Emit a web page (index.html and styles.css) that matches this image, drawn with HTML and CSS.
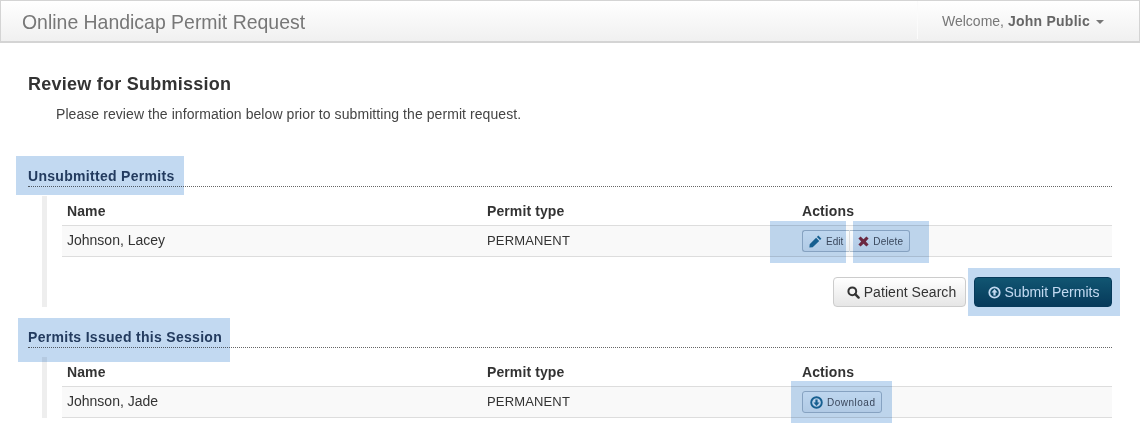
FILE: index.html
```html
<!DOCTYPE html>
<html lang="en">
  <head>
    <meta charset="UTF-8" />
    <title>Online Handicap Permit Request</title>
    <link rel="stylesheet" href="styles.css">
  </head>
  <body>
    <nav class="navbar">
      <span class="brand">Online Handicap Permit Request</span>
      <div class="user-menu">Welcome, <b>John Public</b><span class="caret"></span></div>
    </nav>

    <main class="content">
      <h1>Review for Submission</h1>
      <p class="intro">Please review the information below prior to submitting the permit request.</p>

      <section class="first-section">
        <h2 class="section-title"><span class="mark mark-unsubmitted"></span>Unsubmitted Permits</h2>
        <div class="section-body">
          <div class="permit-table">
            <div class="row head">
              <div class="col-name">Name</div>
              <div class="col-type">Permit type</div>
              <div class="col-actions">Actions</div>
            </div>
            <div class="row data">
              <div class="col-name">Johnson, Lacey</div>
              <div class="col-type">PERMANENT</div>
              <div class="col-actions">
                <button class="btn-small btn-edit">
                  <span class="mark mark-edit"></span>
                  <svg class="icon" width="13" height="13" viewBox="0 0 13 13"><path fill="#1d6f98" d="M9.3 0.6 12.4 3.7 11 5.1 7.9 2z M7.1 2.8 10.2 5.9 3.7 12.3 0.4 12.6 0.7 9.2z"/></svg>
                  Edit
                </button>
                <button class="btn-small btn-delete">
                  <span class="mark mark-delete"></span>
                  <svg class="icon" width="11" height="11" viewBox="0 0 11 11"><path fill="#8c2f45" d="M2.6 0.4 5.5 3.2 8.4 0.4 10.6 2.6 7.8 5.5 10.6 8.4 8.4 10.6 5.5 7.8 2.6 10.6 0.4 8.4 3.2 5.5 0.4 2.6z"/></svg>
                  Delete
                </button>
              </div>
            </div>
          </div>
          <div class="form-actions">
            <button class="btn btn-default">
              <svg class="icon" width="13" height="13" viewBox="0 0 13 13"><circle cx="5.3" cy="5.3" r="3.9" fill="none" stroke="#333" stroke-width="2"/><path d="M8.2 8.2 11.6 11.6" stroke="#333" stroke-width="2.4" stroke-linecap="round"/></svg>
              Patient Search
            </button>
            <button class="btn btn-primary">
              <span class="mark mark-submit"></span>
              <svg class="icon" width="13" height="13" viewBox="0 0 13 13"><circle cx="6.5" cy="6.5" r="5.2" fill="none" stroke="#fff" stroke-width="1.8"/><path fill="#fff" d="M6.5 3 9.5 6.4H7.6V9.6H5.4V6.4H3.5z"/></svg>
              Submit Permits
            </button>
          </div>
        </div>
      </section>

      <section>
        <h2 class="section-title"><span class="mark mark-issued"></span>Permits Issued this Session</h2>
        <div class="section-body">
          <div class="permit-table">
            <div class="row head">
              <div class="col-name">Name</div>
              <div class="col-type">Permit type</div>
              <div class="col-actions">Actions</div>
            </div>
            <div class="row data">
              <div class="col-name">Johnson, Jade</div>
              <div class="col-type">PERMANENT</div>
              <div class="col-actions">
                <button class="btn-small btn-download">
                  <span class="mark mark-download"></span>
                  <svg class="icon" width="13" height="13" viewBox="0 0 13 13"><circle cx="6.5" cy="6.5" r="5.3" fill="none" stroke="#1d6f98" stroke-width="1.9"/><path fill="#1d6f98" d="M6.5 10 3.5 6.6H5.4V3.4H7.6V6.6H9.5z"/></svg>
                  Download
                </button>
              </div>
            </div>
          </div>
        </div>
      </section>
    </main>
  </body>
</html>
```

FILE: styles.css
```css
* {
  box-sizing: border-box;
}
body {
  margin: 0;
  font-family: "Liberation Sans", Arial, sans-serif;
  font-size: 14px;
  color: #333;
  background: #fff;
  overflow: hidden;
}

/* Top bar */
.navbar {
  display: flex;
  justify-content: space-between;
  height: 43px;
  background: linear-gradient(to bottom, #fff, #f0f0f0);
  border: 1px solid #d4d4d4;
  border-width: 1px 1px 2px 1px;
}
.brand {
  padding-left: 21px;
  font-size: 19.45px;
  line-height: 42px;
  color: #777;
}
.user-menu {
  width: 222px;
  padding: 0 0 0 24px;
  margin-bottom: 2px;
  border-left: 1px solid #fbfbfb;
  font-size: 14px;
  line-height: 40px;
  color: #777;
}
.user-menu b {
  letter-spacing: 0.25px;
  color: #666;
}
.caret {
  display: inline-block;
  margin-left: 6px;
  vertical-align: middle;
  border-top: 4px solid #777;
  border-left: 4px solid transparent;
  border-right: 4px solid transparent;
}

/* Page */
.content {
  padding: 0 28px;
}
h1 {
  margin: 30px 0 0;
  font-size: 18px;
  line-height: 22px;
  letter-spacing: 0.25px;
  color: #333;
}
.intro {
  margin: 9px 0 0 28px;
  line-height: 20px;
  letter-spacing: 0.07px;
  color: #444;
}
.first-section {
  margin-top: 42px;
}
.section-title {
  position: relative;
  margin: 0;
  height: 21px;
  font-size: 14px;
  line-height: 20px;
  letter-spacing: 0.3px;
  color: #2d4564;
  border-bottom: 1px dotted #666;
}
.section-body {
  margin: 9px 0 20px 14px;
  padding-left: 15px;
  border-left: 5px solid #eee;
}

/* Tables */
.row {
  display: flex;
  align-items: center;
}
.head {
  height: 29px;
  padding-top: 1px;
  font-weight: bold;
  letter-spacing: 0.1px;
  color: #333;
}
.data {
  height: 32px;
  background: #f9f9f9;
  border-top: 1px solid #ddd;
  border-bottom: 1px solid #ddd;
}
.col-name {
  width: 425px;
  padding-left: 5px;
}
.col-type {
  width: 315px;
}
.data .col-name,
.data .col-type {
  padding-bottom: 2px;
}
.data .col-type {
  font-size: 13px;
  letter-spacing: 0.15px;
}
.col-actions {
  display: flex;
}

/* Buttons */
.btn-small {
  position: relative;
  display: flex;
  align-items: center;
  gap: 4px;
  height: 22px;
  padding: 0 6px;
  font-family: inherit;
  font-size: 10px;
  color: #4a5260;
  background: linear-gradient(to bottom, #fafcfd, #e9eef3);
  border: 1px solid #b0bfcc;
  border-radius: 3px;
}
.btn-edit {
  border-right: none;
  border-radius: 3px 0 0 3px;
}
.btn-delete {
  padding-left: 8px;
  letter-spacing: 0.2px;
  border-left-color: #ddd;
  border-radius: 0 3px 3px 0;
}
.btn-download {
  padding: 0 6px 0 7px;
  letter-spacing: 0.5px;
}
.form-actions {
  display: flex;
  justify-content: flex-end;
  gap: 8px;
  margin-top: 20px;
}
.btn {
  position: relative;
  display: flex;
  align-items: center;
  justify-content: center;
  gap: 4px;
  height: 30px;
  font-family: inherit;
  font-size: 14px;
  border-radius: 4px;
}
.btn-default {
  width: 133px;
  padding-left: 10px;
  letter-spacing: 0.05px;
  color: #333;
  background: linear-gradient(to bottom, #fff, #e6e6e6);
  border: 1px solid #ccc;
}
.btn-primary {
  width: 138px;
  padding-left: 7px;
  color: #fff;
  background: linear-gradient(to bottom, #166478, #084460);
  border: 1px solid #084460;
}

/* Annotation highlights laid over the page */
.mark {
  position: absolute;
  background: #c2d9f1;
  mix-blend-mode: multiply;
  pointer-events: none;
}
.mark-unsubmitted {
  left: -12px;
  top: -10px;
  width: 168px;
  height: 39px;
}
.mark-issued {
  left: -10px;
  top: -9px;
  width: 212px;
  height: 44px;
}
.mark-edit {
  left: -33px;
  top: -10px;
  width: 76px;
  height: 42px;
}
.mark-delete {
  left: 3px;
  top: -10px;
  width: 76px;
  height: 42px;
}
.mark-submit {
  left: -7px;
  top: -10px;
  width: 152px;
  height: 48px;
}
.mark-download {
  left: -12px;
  top: -11px;
  width: 101px;
  height: 42px;
}
```
